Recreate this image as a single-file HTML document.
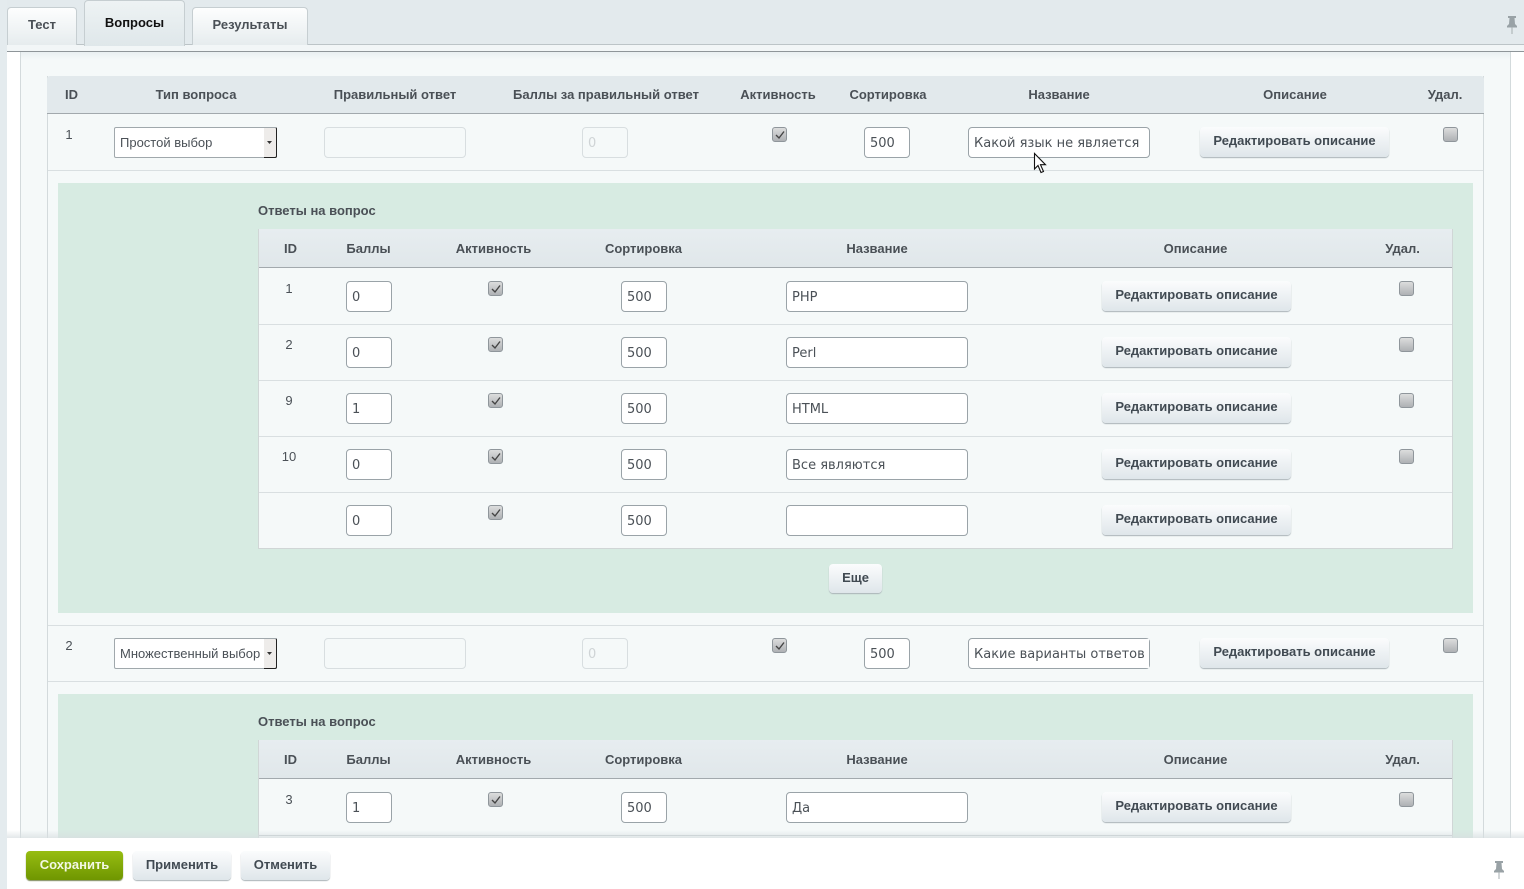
<!DOCTYPE html>
<html lang="ru"><head><meta charset="utf-8"><title>Вопросы</title>
<style>
html,body{margin:0;padding:0;width:1524px;height:889px;overflow:hidden;background:#fff}
body{position:relative;font:13px "Liberation Sans",sans-serif;color:#4b5157}
div,span,svg{position:absolute;box-sizing:border-box}
svg{overflow:visible}
.h{font-weight:bold;color:#4a5056;text-align:center;line-height:16px;height:16px;white-space:nowrap}
.id{text-align:center;line-height:16px;height:16px;color:#4b5157}
.in{background:#fff;border:1px solid #9aa3a8;border-radius:4px;height:31px;font:13px/31px "DejaVu Sans",sans-serif;color:#4b5157;padding-left:5px;white-space:nowrap;overflow:hidden}
.dis{background:#f5f9f9;border:1px solid #d8dee0;color:#cfd4d6}
.sel{font:13px/29px "Liberation Sans",sans-serif;border-radius:2px;border-color:#a0a8ac}
.cb{width:15px;height:15px;border:1px solid #8f969b;border-radius:3px;background:linear-gradient(#dcdddd,#aeb1b4)}
.btn{height:30px;border-radius:4px;background:linear-gradient(#fbfcfd,#dfe6ea);box-shadow:0 1px 1px #aab3b8;font-weight:bold;color:#414a52;text-align:center;line-height:28px;white-space:nowrap}
.tab{top:7px;height:38px;background:linear-gradient(#fdfefe,#e6ecee);border:1px solid #c6ced1;border-bottom:0;border-radius:4px 4px 0 0;font-weight:bold;color:#4a5056;text-align:center;line-height:33px}
.ln{height:1px;background:#d9dfe1}
.hd{background:#e2e9ec;border-bottom:1px solid #a2a9ad}
.arr{width:13px;height:31px;background:#eeecea;border-right:1px solid #222;border-bottom:1px solid #222;border-top:1px solid #a0a8ac;border-radius:0 2px 2px 0}
</style></head><body>

<!-- page frame -->
<div style="left:0;top:0;width:7px;height:889px;background:#e4ebee"></div>
<div style="left:20px;top:52px;width:1491px;height:790px;background:#f5f9f9;border-left:1px solid #d3dadc;border-right:1px solid #d3dadc"></div>
<div style="left:47px;top:76px;width:1437px;height:770px;border-left:1px solid #d3dadc;border-right:1px solid #d3dadc"></div>

<!-- top tab band -->
<div style="left:7px;top:0;width:1517px;height:45px;background:#e3eaed;border-bottom:1px solid #bcc4c7"></div>
<div style="left:7px;top:45px;width:1517px;height:6px;background:#f2f6f7"></div>
<div style="left:7px;top:51px;width:1517px;height:1px;background:#8e9599"></div>
<div style="left:21px;top:52px;width:1489px;height:8px;background:linear-gradient(#e9eff1,#f5f9f9)"></div>
<div class="tab" style="left:7px;width:70px">Тест</div>
<div class="tab" style="left:84px;top:0;width:101px;height:46px;line-height:43px;color:#111;background:linear-gradient(#eef3f4,#dfe7ea)">Вопросы</div>
<div class="tab" style="left:192px;width:116px">Результаты</div>
<svg style="left:1506px;top:16px" width="12" height="18" viewBox="0 0 12 18"><path d="M2 0h8v2H8.500l.5 6 2 2v1.500H1V10l2-2 .5-6H2z" fill="#99a2a6"/><path d="M6 11v7" stroke="#a5adb0" stroke-width="1"/></svg>

<!-- outer header -->
<div class="hd" style="left:47px;top:76px;width:1437px;height:38px;border-radius:3px 3px 0 0"></div>
<div class="h" style="left:47px;top:87px;width:49px">ID</div>
<div class="h" style="left:96px;top:87px;width:200px">Тип вопроса</div>
<div class="h" style="left:295px;top:87px;width:200px">Правильный ответ</div>
<div class="h" style="left:496px;top:87px;width:220px">Баллы за правильный ответ</div>
<div class="h" style="left:718px;top:87px;width:120px">Активность</div>
<div class="h" style="left:828px;top:87px;width:120px">Сортировка</div>
<div class="h" style="left:959px;top:87px;width:200px">Название</div>
<div class="h" style="left:1195px;top:87px;width:200px">Описание</div>
<div class="h" style="left:1405px;top:87px;width:80px">Удал.</div>

<!-- question 1 -->
<div class="id" style="left:49px;top:127px;width:40px">1</div>
<div class="in sel" style="left:114px;top:127px;width:163px">Простой выбор</div>
<div class="arr" style="left:264px;top:127px"></div>
<svg style="left:267px;top:141px" width="6" height="3"><path d="M0 0h5L2.500 3z" fill="#333"/></svg>
<div class="in dis" style="left:324px;top:127px;width:142px"></div>
<div class="in dis" style="left:582px;top:127px;width:46px">0</div>
<div class="cb" style="left:772px;top:127px"><svg style="left:2px;top:2px" width="10" height="10"><path d="M1 5l3 3 5-6.500" fill="none" stroke="#444" stroke-width="1.400"/></svg></div>
<div class="in" style="left:864px;top:127px;width:46px">500</div>
<div class="in" style="left:968px;top:127px;width:182px">Какой язык не является</div>
<div class="btn" style="left:1200px;top:127px;width:189px">Редактировать описание</div>
<div class="cb" style="left:1443px;top:127px"></div>
<div class="ln" style="left:48px;top:170px;width:1435px"></div>

<!-- answers 1 -->
<div style="left:58px;top:183px;width:1415px;height:430px;background:#d7ebe2"></div>
<div class="h" style="left:258px;top:203px;color:#4a5056">Ответы на вопрос</div>
<div style="left:258px;top:229px;width:1195px;height:320px;background:#f5f9f9;border:1px solid #d0d6d6;border-top:0"></div>
<div class="hd" style="left:259px;top:229px;width:1193px;height:39px;background:linear-gradient(#e7edf0,#e0e7ea)"></div>
<div class="h" style="left:259px;top:241px;width:63px">ID</div>
<div class="h" style="left:329px;top:241px;width:79px">Баллы</div>
<div class="h" style="left:433px;top:241px;width:121px">Активность</div>
<div class="h" style="left:584px;top:241px;width:119px">Сортировка</div>
<div class="h" style="left:777px;top:241px;width:200px">Название</div>
<div class="h" style="left:1096px;top:241px;width:199px">Описание</div>
<div class="h" style="left:1362px;top:241px;width:81px">Удал.</div>

<div class="id" style="left:269px;top:281px;width:40px">1</div>
<div class="in" style="left:346px;top:281px;width:46px">0</div>
<div class="cb" style="left:488px;top:281px"><svg style="left:2px;top:2px" width="10" height="10"><path d="M1 5l3 3 5-6.500" fill="none" stroke="#444" stroke-width="1.400"/></svg></div>
<div class="in" style="left:621px;top:281px;width:46px">500</div>
<div class="in" style="left:786px;top:281px;width:182px">PHP</div>
<div class="btn" style="left:1102px;top:281px;width:189px">Редактировать описание</div>
<div class="cb" style="left:1399px;top:281px"></div>
<div class="ln" style="left:259px;top:324px;width:1193px"></div>

<div class="id" style="left:269px;top:337px;width:40px">2</div>
<div class="in" style="left:346px;top:337px;width:46px">0</div>
<div class="cb" style="left:488px;top:337px"><svg style="left:2px;top:2px" width="10" height="10"><path d="M1 5l3 3 5-6.500" fill="none" stroke="#444" stroke-width="1.400"/></svg></div>
<div class="in" style="left:621px;top:337px;width:46px">500</div>
<div class="in" style="left:786px;top:337px;width:182px">Perl</div>
<div class="btn" style="left:1102px;top:337px;width:189px">Редактировать описание</div>
<div class="cb" style="left:1399px;top:337px"></div>
<div class="ln" style="left:259px;top:380px;width:1193px"></div>

<div class="id" style="left:269px;top:393px;width:40px">9</div>
<div class="in" style="left:346px;top:393px;width:46px">1</div>
<div class="cb" style="left:488px;top:393px"><svg style="left:2px;top:2px" width="10" height="10"><path d="M1 5l3 3 5-6.500" fill="none" stroke="#444" stroke-width="1.400"/></svg></div>
<div class="in" style="left:621px;top:393px;width:46px">500</div>
<div class="in" style="left:786px;top:393px;width:182px">HTML</div>
<div class="btn" style="left:1102px;top:393px;width:189px">Редактировать описание</div>
<div class="cb" style="left:1399px;top:393px"></div>
<div class="ln" style="left:259px;top:436px;width:1193px"></div>

<div class="id" style="left:269px;top:449px;width:40px">10</div>
<div class="in" style="left:346px;top:449px;width:46px">0</div>
<div class="cb" style="left:488px;top:449px"><svg style="left:2px;top:2px" width="10" height="10"><path d="M1 5l3 3 5-6.500" fill="none" stroke="#444" stroke-width="1.400"/></svg></div>
<div class="in" style="left:621px;top:449px;width:46px">500</div>
<div class="in" style="left:786px;top:449px;width:182px">Все являются</div>
<div class="btn" style="left:1102px;top:449px;width:189px">Редактировать описание</div>
<div class="cb" style="left:1399px;top:449px"></div>
<div class="ln" style="left:259px;top:492px;width:1193px"></div>

<div class="in" style="left:346px;top:505px;width:46px">0</div>
<div class="cb" style="left:488px;top:505px"><svg style="left:2px;top:2px" width="10" height="10"><path d="M1 5l3 3 5-6.500" fill="none" stroke="#444" stroke-width="1.400"/></svg></div>
<div class="in" style="left:621px;top:505px;width:46px">500</div>
<div class="in" style="left:786px;top:505px;width:182px"></div>
<div class="btn" style="left:1102px;top:505px;width:189px">Редактировать описание</div>

<div class="btn" style="left:829px;top:564px;width:53px;height:29px">Еще</div>

<!-- question 2 -->
<div class="ln" style="left:48px;top:625px;width:1435px"></div>
<div class="id" style="left:49px;top:638px;width:40px">2</div>
<div class="in sel" style="left:114px;top:638px;width:163px">Множественный выбор</div>
<div class="arr" style="left:264px;top:638px"></div>
<svg style="left:267px;top:652px" width="6" height="3"><path d="M0 0h5L2.500 3z" fill="#333"/></svg>
<div class="in dis" style="left:324px;top:638px;width:142px"></div>
<div class="in dis" style="left:582px;top:638px;width:46px">0</div>
<div class="cb" style="left:772px;top:638px"><svg style="left:2px;top:2px" width="10" height="10"><path d="M1 5l3 3 5-6.500" fill="none" stroke="#444" stroke-width="1.400"/></svg></div>
<div class="in" style="left:864px;top:638px;width:46px">500</div>
<div class="in" style="left:968px;top:638px;width:182px">Какие варианты ответов</div>
<div style="left:1144px;top:639px;width:5px;height:29px;background:#fff"></div>
<div class="btn" style="left:1200px;top:638px;width:189px">Редактировать описание</div>
<div class="cb" style="left:1443px;top:638px"></div>
<div class="ln" style="left:48px;top:681px;width:1435px"></div>

<!-- answers 2 -->
<div style="left:58px;top:694px;width:1415px;height:160px;background:#d7ebe2"></div>
<div class="h" style="left:258px;top:714px">Ответы на вопрос</div>
<div style="left:258px;top:740px;width:1195px;height:110px;background:#f5f9f9;border:1px solid #d0d6d6;border-top:0"></div>
<div class="hd" style="left:259px;top:740px;width:1193px;height:39px;background:linear-gradient(#e7edf0,#e0e7ea)"></div>
<div class="h" style="left:259px;top:752px;width:63px">ID</div>
<div class="h" style="left:329px;top:752px;width:79px">Баллы</div>
<div class="h" style="left:433px;top:752px;width:121px">Активность</div>
<div class="h" style="left:584px;top:752px;width:119px">Сортировка</div>
<div class="h" style="left:777px;top:752px;width:200px">Название</div>
<div class="h" style="left:1096px;top:752px;width:199px">Описание</div>
<div class="h" style="left:1362px;top:752px;width:81px">Удал.</div>
<div class="id" style="left:269px;top:792px;width:40px">3</div>
<div class="in" style="left:346px;top:792px;width:46px">1</div>
<div class="cb" style="left:488px;top:792px"><svg style="left:2px;top:2px" width="10" height="10"><path d="M1 5l3 3 5-6.500" fill="none" stroke="#444" stroke-width="1.400"/></svg></div>
<div class="in" style="left:621px;top:792px;width:46px">500</div>
<div class="in" style="left:786px;top:792px;width:182px">Да</div>
<div class="btn" style="left:1102px;top:792px;width:189px">Редактировать описание</div>
<div class="cb" style="left:1399px;top:792px"></div>
<div class="ln" style="left:259px;top:835px;width:1193px;background:#c5cdcf"></div>

<!-- bottom bar -->
<div style="left:7px;top:830px;width:1517px;height:8px;background:linear-gradient(rgba(225,232,234,0),rgba(215,222,224,.7))"></div>
<div style="left:7px;top:838px;width:1517px;height:51px;background:#fff"></div>
<div class="btn" style="left:26px;top:851px;width:97px;height:29px;background:linear-gradient(#97bd12,#6f9600);box-shadow:0 1px 1px #7d8a5a;color:#f3f8e4">Сохранить</div>
<div class="btn" style="left:133px;top:851px;width:98px;height:29px">Применить</div>
<div class="btn" style="left:241px;top:851px;width:89px;height:29px">Отменить</div>
<svg style="left:1493px;top:861px" width="12" height="18" viewBox="0 0 12 18"><path d="M2 0h8v2H8.500l.5 6 2 2v1.500H1V10l2-2 .5-6H2z" fill="#99a2a6"/><path d="M6 11v7" stroke="#a5adb0" stroke-width="1"/></svg>

<!-- mouse cursor -->
<svg style="left:1034px;top:153px" width="13" height="21" viewBox="0 0 13 21"><path d="M.5.500v15.500l3.500-3.500 3 7 2.500-1-3-6.800h5z" fill="#fff" stroke="#111" stroke-width="1.100" stroke-linejoin="miter"/></svg>

</body></html>
